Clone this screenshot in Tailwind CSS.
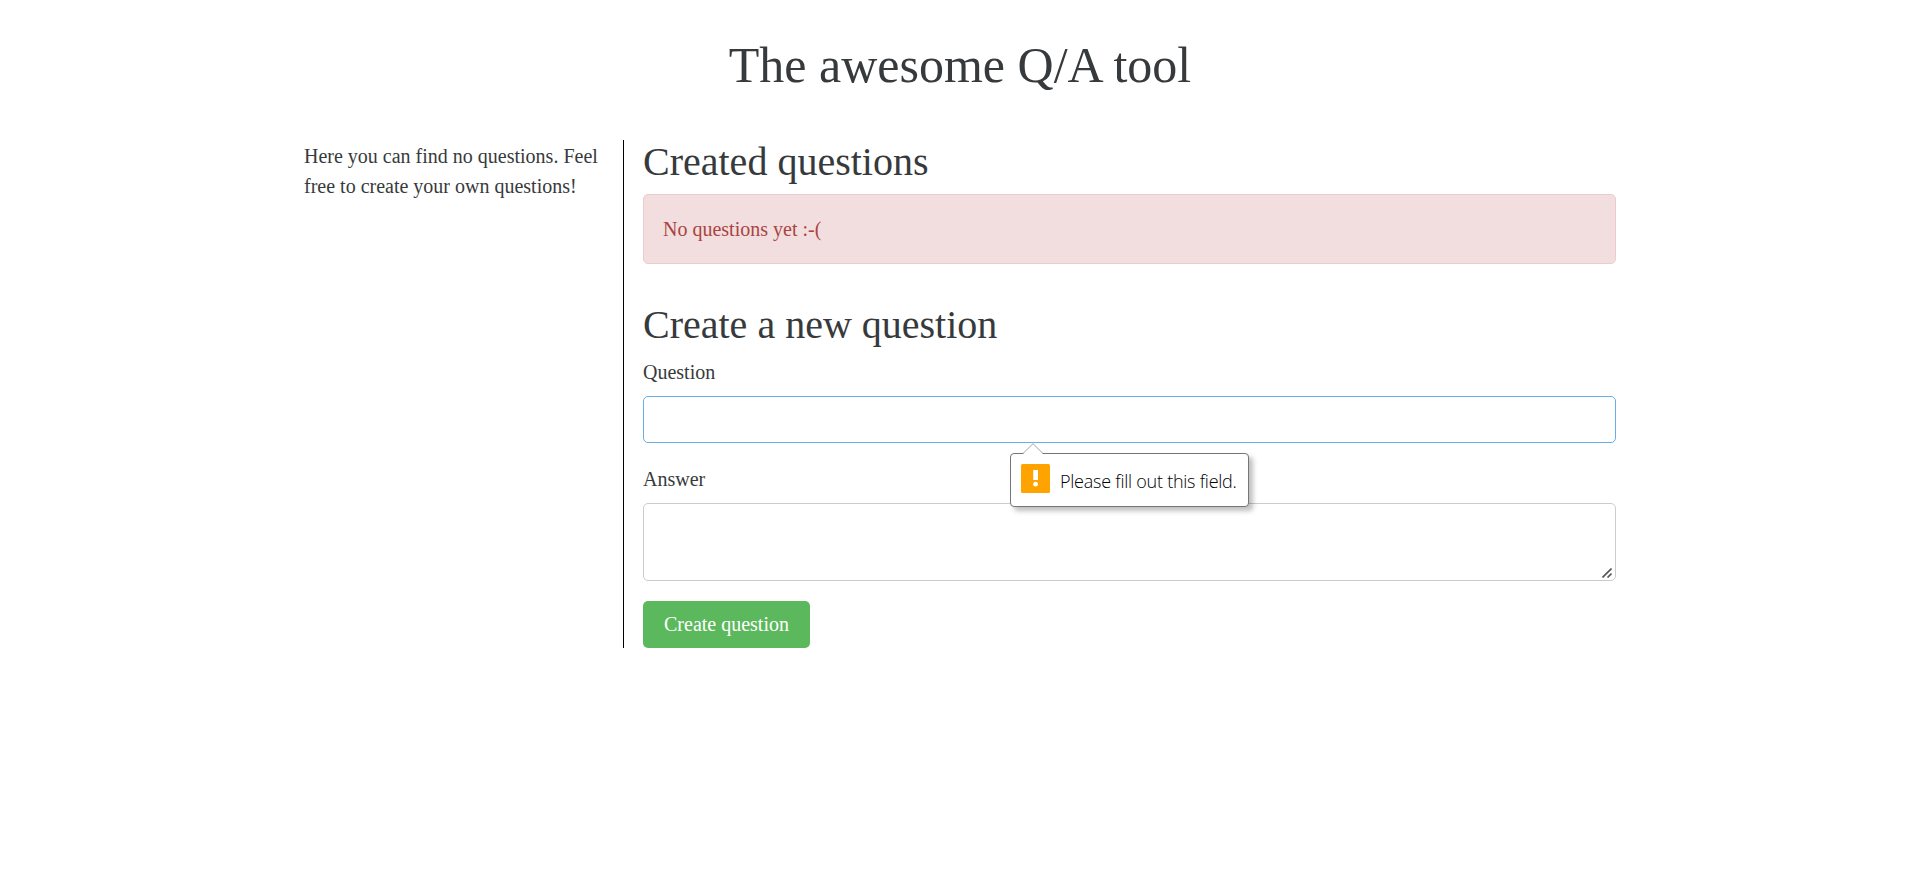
<!DOCTYPE html>
<html lang="en">
<head>
<meta charset="utf-8">
<title>The awesome Q/A tool</title>
<script src="https://cdn.jsdelivr.net/npm/@tailwindcss/browser@4"></script>
</head>
<body class="bg-white text-[#373a3c] font-['Liberation_Serif',serif] text-[20px] leading-[30px]">
<main class="mx-auto w-[1312px] pt-[38px]">
  <h1 class="text-center text-[50px] leading-[55px] mb-[47px]">The awesome Q/A tool</h1>
  <div class="flex h-[508px]">
    <aside class="w-[319px] shrink-0 pt-px"><p>Here you can find no questions. Feel<br>free to create your own questions!</p></aside>
    <section class="flex-1 border-l border-black pl-[19px]">
      <h2 class="text-[40px] leading-[44px] mb-[10px]">Created questions</h2>
      <div class="h-[70px] rounded-[5px] border border-[#ebcccc] bg-[#f2dede] text-[#a94442] px-[19px] py-[19px] mb-[38px]">No questions yet :-(</div>
      <h2 class="text-[40px] leading-[44px] pt-px mb-[10px]">Create a new question</h2>
      <form>
        <label for="question" class="block mb-[9px]">Question</label>
        <div class="relative mb-[21px]">
          <input id="question" type="text" class="block w-full h-[47px] rounded-[5px] border border-[#66afe9] px-[15px] outline-none">
          <div class="absolute z-10 left-[367px] top-[57px] w-[239px] h-[54px] flex items-center rounded-[4px] border border-[#767676] bg-white pl-[10px] shadow-[4px_4px_5px_rgba(0,0,0,0.25)]">
            <svg class="absolute left-[11px] top-[-11px]" width="22" height="12" viewBox="0 0 22 12"><path d="M1 11L11 1L21 11V12H1Z" fill="#fff"/><path d="M1 10.5L11 .7L21 10.5" fill="none" stroke="#a5a5a5"/></svg>
            <svg class="mb-[4px] shrink-0" width="29" height="29" viewBox="0 0 29 29"><rect width="29" height="29" rx="1.5" fill="#ffa300"/><path d="M12.2 6h4.8v10h-4.8z" fill="#fff"/><circle cx="14.6" cy="20.2" r="2.4" fill="#fff"/></svg>
            <span class="ml-[10px] mt-px whitespace-nowrap font-['Open_Sans',sans-serif] font-light text-[18px] tracking-[-0.25px] leading-[24px] text-black">Please fill out this field.</span>
          </div>
        </div>
        <label for="answer" class="block mb-[9px]">Answer</label>
        <div class="relative mb-[20px]">
          <textarea id="answer" class="block w-full h-[78px] resize-none rounded-[5px] border border-[#cccccc] px-[15px] outline-none"></textarea>
          <svg class="absolute right-[4px] bottom-[3px]" width="10" height="10" viewBox="0 0 10 10"><path d="M.5 9.5L9.5.5M5.5 9.5L9.5 5.5" stroke="#555" stroke-width="1.6"/></svg>
        </div>
        <button type="button" class="block w-[167px] h-[47px] pb-px rounded-[5px] bg-[#5cb85c] text-white text-center">Create question</button>
      </form>
    </section>
  </div>
</main>
</body>
</html>
